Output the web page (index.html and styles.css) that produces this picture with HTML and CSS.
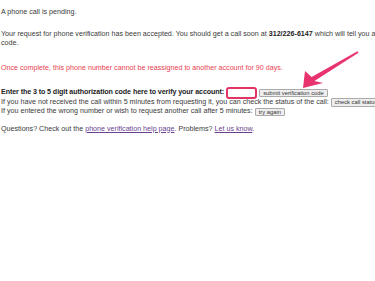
FILE: index.html
```html
<!DOCTYPE html>
<html lang="en">
<head>
    <meta charset="UTF-8">
    <title>Phone verification</title>
    <link rel="stylesheet" href="styles.css">
</head>
<body>
    <div class="page">
        <p class="status">A phone call is pending.</p>

        <p class="notice">Your request for phone verification has been accepted. You should get a call soon at <b>312/226-6147</b> which will tell you an authorization code.</p>

        <p class="warning">Once complete, this phone number cannot be reassigned to another account for 90 days.</p>

        <form class="verify" onsubmit="return false">
            <div class="row">
                <b>Enter the 3 to 5 digit authorization code here to verify your account:</b>
                <input type="text" class="code-input">
                <button class="btn">submit verification code</button>
            </div>
            <div class="row">
                If you have not received the call within 5 minutes from requesting it, you can check the status of the call:
                <button class="btn">check call status</button>
            </div>
            <div class="row">
                If you entered the wrong number or wish to request another call after 5 minutes:
                <button class="btn">try again</button>
            </div>
        </form>

        <p class="help">Questions? Check out the <a href="#">phone verification help page</a>. Problems? <a href="#">Let us know</a>.</p>
    </div>

    <!-- annotation arrow pointing at the submit button -->
    <svg class="arrow" width="375" height="281" viewBox="0 0 375 281">
        <polygon points="303,88 305,71 311.6,76.9 357.5,51.2 358.5,52.8 314.4,81.1 323,83" fill="#e8336f"/>
    </svg>
</body>
</html>
```

FILE: styles.css
```css
* {
    margin: 0;
    padding: 0;
    box-sizing: border-box;
}

html, body {
    overflow: hidden;
}

body {
    font-family: 'Liberation Sans', Arial, sans-serif;
    font-size: 7.15px;
    line-height: 9px;
    color: #3a3a3a;
    background: white;
    width: 375px;
    height: 281px;
}

.page {
    width: 440px;
    padding: 8px 0 0 1px;
}

.status {
    margin-bottom: 13px;
}

.notice {
    margin-bottom: 16px;
}

.notice b {
    color: #222;
}

.warning {
    color: #e8404f;
    margin-bottom: 15px;
}

.verify .row {
    white-space: nowrap;
    height: 9.5px;
    display: flex;
    align-items: center;
    gap: 2px;
}

.verify .row b {
    color: #222;
    letter-spacing: -0.1px;
}

.code-input {
    width: 31px;
    height: 12px;
    border: 2px solid #e23565;
    border-radius: 3px;
    background: white;
    position: relative;
    z-index: 1;
}

.btn {
    font-family: 'Liberation Sans', Arial, sans-serif;
    font-size: 5.8px;
    line-height: 7px;
    color: #333;
    background: #eee;
    border: 1px solid #aaa;
    border-radius: 1px;
    padding: 0 3px;
    height: 8.5px;
}

.help {
    margin-top: 8px;
}

.help a {
    color: #6a3f8e;
}

.arrow {
    position: absolute;
    left: 0;
    top: 0;
    pointer-events: none;
}
```
